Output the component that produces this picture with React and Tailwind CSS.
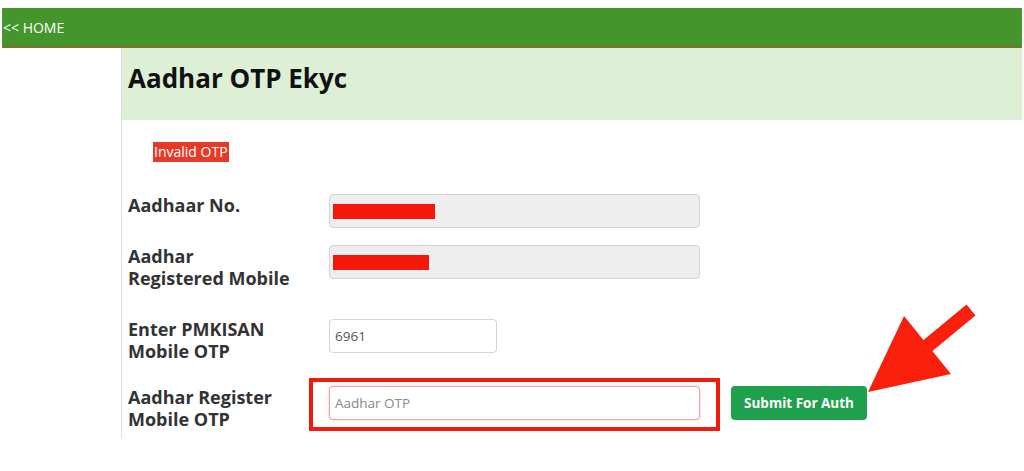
import React from 'react'

const Label = ({ lines }) => (
  <div className="w-[201px] shrink-0 text-[18px] font-bold leading-[22px] text-[#333]">
    {lines.map((l) => (
      <div key={l}>{l}</div>
    ))}
  </div>
)

const Redacted = ({ width }) => (
  <div className="flex h-[34px] w-[371px] items-center rounded-[4px] border border-[#d4d4d4] bg-[#eeeeee] px-[3px]">
    <div className={`h-[15px] bg-[#f5170a] ${width}`} />
  </div>
)

const App = () => {
  return (
    <div className="relative h-[471px] w-[1024px] overflow-hidden bg-white font-['Open_Sans',sans-serif]">
      {/* Top bar */}
      <div className="mx-[2px] mt-[8px] flex h-[40px] items-center border-b-2 border-[#7d7230] bg-[#44962a] pl-[1px] text-[14px] text-white">
        &lt;&lt; HOME
      </div>

      {/* Panel */}
      <div className="ml-[121px] mr-[2px] h-[390px] border-l border-[#dedede]">
        <div className="flex h-[72px] items-start bg-[#ddf0d6] pl-[6px] pt-[11px] text-[26px] font-bold text-[#111]">
          Aadhar OTP Ekyc
        </div>

        <div className="pl-[6px]">
          <div className="ml-[25px] mt-[22px] inline-block h-[20px] bg-[#e53b26] px-[1px] text-[14px] leading-[20px] text-white">
            Invalid OTP
          </div>

          {/* Aadhaar No. */}
          <div className="mt-[31px] flex items-start">
            <Label lines={['Aadhaar No.']} />
            <Redacted width="w-[102px]" />
          </div>

          {/* Registered mobile */}
          <div className="mt-[17px] flex items-start">
            <Label lines={['Aadhar', 'Registered Mobile']} />
            <Redacted width="w-[96px]" />
          </div>

          {/* PMKISAN OTP */}
          <div className="mt-[29px] flex items-start">
            <Label lines={['Enter PMKISAN', 'Mobile OTP']} />
            <div className="mt-[1px] flex h-[34px] w-[168px] items-center rounded-[4px] border border-[#d4d4d4] bg-white px-[5px] text-[13.5px] text-[#555]">
              6961
            </div>
          </div>

          {/* Aadhar OTP */}
          <div className="mt-[24px] flex items-start">
            <Label lines={['Aadhar Register', 'Mobile OTP']} />
            <div className="relative">
              <div className="flex h-[34px] w-[371px] items-center rounded-[4px] border border-[#e4a6a6] bg-white px-[5px] text-[13.5px] text-[#888] shadow-[0_0_3px_rgba(220,80,80,0.35)]">
                Aadhar OTP
              </div>
              <div className="pointer-events-none absolute left-[-20px] top-[-8px] h-[53px] w-[411px] border-4 border-[#f21a0a]" />
            </div>
            <button className="ml-[31px] h-[34px] w-[136px] rounded-[4px] bg-[#1fa04c] text-[13.5px] font-bold text-white">
              Submit For Auth
            </button>
          </div>
        </div>
      </div>

      {/* Annotation arrow */}
      <svg className="pointer-events-none absolute left-0 top-0" width="1024" height="471" viewBox="0 0 1024 471">
        <line x1="925" y1="348" x2="971" y2="310" stroke="#f8200c" strokeWidth="14" />
        <polygon points="868,392 904,316 951,374" fill="#f8200c" />
      </svg>
    </div>
  )
}

export default App
